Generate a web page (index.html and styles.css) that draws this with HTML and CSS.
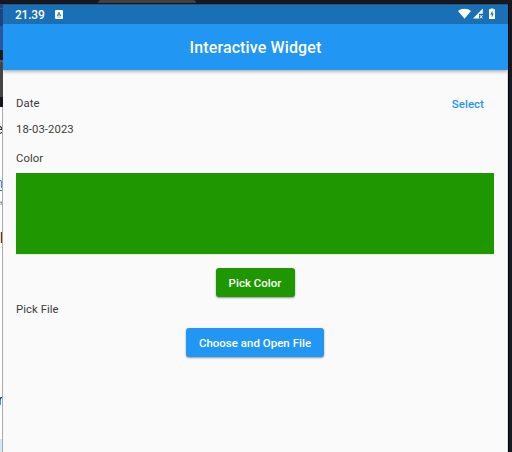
FILE: index.html
```html
<!DOCTYPE html>
<html lang="en">
<head>
<meta charset="utf-8">
<title>Interactive Widget</title>
<link rel="stylesheet" href="styles.css">
</head>
<body>
<div class="desktop-top"><div class="tab"></div></div>
<div class="desktop">
  <div class="behind">
    <div class="b-blue"></div>
    <div class="b-dark"></div>
    <div class="b-grey"></div>
    <div class="b-black"></div>
    <div class="b-page">
      <span class="frag f1">e</span>
      <span class="frag f2">n</span>
      <span class="frag f3">,</span>
      <span class="frag f4">l</span>
      <span class="frag f5">r</span>
      <span class="b-foot"></span>
    </div>
  </div>
  <main class="phone">
    <div class="status">
      <span class="time">21.39</span>
      <svg class="badge" viewBox="0 0 8 9" width="8" height="9"><rect width="8" height="9" rx="1" fill="#fff"/><path d="M2.3 6 4 2.3 5.7 6M2.9 4.9h2.2" fill="none" stroke="#1b6fb5" stroke-width=".9"/><path d="M1.8 7h4.4" stroke="#1b6fb5" stroke-width=".5"/></svg>
      <div class="indicators">
        <svg viewBox="0 0 13 11" width="13" height="11"><path d="M0 2.7C3.8-.4 9.200-.4 13 2.700L6.500 10.500Z" fill="#fff"/></svg>
        <svg class="signal" viewBox="0 0 10 11" width="10" height="11"><path d="M0 10.300 9.800.300V5.500H6V10.300Z" fill="#fff"/><path d="m6.900 6.800 2.600 3.300m0-3.300-2.600 3.300" stroke="#fff" stroke-width=".9"/></svg>
        <svg class="battery" viewBox="0 0 6 11" width="6" height="11"><path d="M1.800 0h2.400v1H6v9.800H0V1h1.800Z" fill="#fff"/><path d="M3.500 2.300 1.300 6.200h1.400v3L4.800 5.300H3.500Z" fill="#1b6fb5"/></svg>
      </div>
    </div>
    <header class="appbar"><h1>Interactive Widget</h1></header>
    <section class="content">
      <div class="row"><span>Date</span><button class="text-btn">Select</button></div>
      <p class="value">18-03-2023</p>
      <p class="label">Color</p>
      <div class="swatch"></div>
      <button class="btn green">Pick Color</button>
      <p class="file">Pick File</p>
      <button class="btn blue">Choose and Open File</button>
    </section>
  </main>
  <div class="edge"></div>
</div>
</body>
</html>
```
FILE: styles.css
```css
* { box-sizing: border-box; }
body { margin: 0; width: 512px; height: 452px; overflow: hidden; background: #171922; font-family: Roboto, sans-serif; }
h1, p { margin: 0; }
button { border: 0; padding: 0; background: none; font: inherit; }
.desktop-top { height: 4px; background: #171820; border-bottom: 1px solid #141519; }
.tab { width: 98px; height: 3px; margin-left: 98px; background: #414141; border-radius: 3px 3px 0 0; }
.desktop { display: flex; height: 448px; }
.behind { width: 3px; height: 448px; display: flex; flex-direction: column; overflow: hidden; }
.b-blue { flex: 0 0 46px; background: linear-gradient(#20437c 0 4px, #2b5da5 4px 5px, #20437c 5px 22px, #2957a0 22px); }
.b-dark { flex: 0 0 10px; background: #20191a; }
.b-grey { flex: 0 0 37px; background: linear-gradient(#5a5a58 0 2px, #424446 2px); }
.b-black { flex: 0 0 10px; background: #15171f; }
.b-page { position: relative; flex: 1; background: #fff; border-right: 1px solid #aaa; overflow: hidden; }
.frag { position: absolute; right: -1px; font: 14px/14px "Liberation Sans", sans-serif; color: #222; }
.f1 { top: 15px; }
.f2 { top: 70px; line-height: 13px; color: #2683c6; border-bottom: 1px solid #2683c6; }
.f3 { top: 84px; color: #777; }
.f4 { top: 124px; }
.f5 { top: 286px; }
.b-foot { position: absolute; left: 0; bottom: 0; width: 2px; height: 13px; background: #d4e9f2; }
.phone { width: 505px; height: 448px; background: #fafafa; border-right: 1px solid #ddd; }
.edge { width: 4px; background: #171922; border-left: 1px solid #030408; }
.status { height: 20px; margin-right: -1px; display: flex; align-items: center; background: #1b6fb5; color: #fff; padding: 0 13px 0 12px; border-top: 1px solid #175b94; }
.time { font-size: 12px; line-height: 20px; font-weight: 500; letter-spacing: -.2px; }
.badge { margin: 0 0 0 10px; }
.indicators { display: flex; align-items: center; margin-left: auto; transform: translateY(-.7px); }
.signal { margin-left: 2px; }
.battery { margin-left: 6px; }
.appbar { height: 46px; margin-right: -1px; padding-top: 2px; display: flex; align-items: center; justify-content: center; background: #2196f3; color: #fff; box-shadow: 0 1px 4px rgba(0,0,0,.4); clip-path: inset(0 0 -8px 0); }
h1 { font-size: 16px; font-weight: 500; line-height: 20px; letter-spacing: .12px; }
.content { padding: 23px 13px 0; display: flex; flex-direction: column; font-size: 11.3px; line-height: 16px; letter-spacing: .07px; color: #3c3c3c; }
.row { display: flex; justify-content: space-between; height: 22px; line-height: 22px; }
.text-btn { color: #2196f3; font-size: 11.4px; font-weight: 500; letter-spacing: .08px; margin-right: 10px; padding-bottom: 2px; }
.value { margin-top: 7px; }
.label { margin-top: 13px; }
.swatch { height: 81px; margin-top: 6px; background: #1f9700; box-shadow: 0 .4px 0 #b9dfb0; }
.btn { align-self: center; height: 29px; border-radius: 3px; color: #fff; font-size: 11.4px; font-weight: 500; letter-spacing: .06px; box-shadow: 0 1px 2px rgba(0,0,0,.4); }
.green { width: 79px; margin-top: 14px; background: #1f9700; }
.file { margin-top: 4px; padding-top: 1px; }
.blue { width: 138px; margin-top: 10px; padding-top: 1px; background: #2196f3; }
```
